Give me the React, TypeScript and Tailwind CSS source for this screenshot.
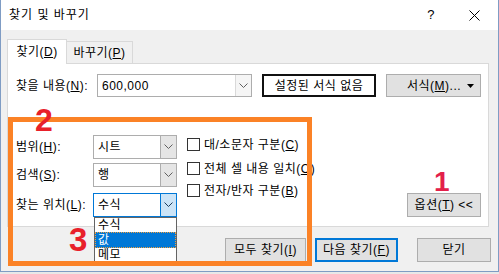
const font = { fontFamily: '"Liberation Sans", "Noto Sans CJK KR", sans-serif' };

const Chevron = ({ color = "#606060" }: { color?: string }) => (
  <svg width="9" height="6" viewBox="0 0 9 6">
    <path d="M0.5 0.5 L4.5 4.5 L8.5 0.5" fill="none" stroke={color} strokeWidth="1" />
  </svg>
);

const Combo = ({
  value,
  focused = false,
  className = "",
}: {
  value: string;
  focused?: boolean;
  className?: string;
}) => (
  <div
    className={`flex h-[24px] w-[84px] border bg-white ${
      focused ? "border-[#0078d7]" : "border-[#adadad]"
    } ${className}`}
  >
    <div className="flex flex-1 items-center pl-[4px] text-[12px]">{value}</div>
    <div
      className={`flex w-[16px] items-center justify-center border-l ${
        focused ? "border-[#0078d7] bg-[#cce4f7]" : "border-[#adadad] bg-[#e5e5e5]"
      }`}
    >
      <Chevron color={focused ? "#1c3c5c" : "#606060"} />
    </div>
  </div>
);

const Check = ({ children, className = "" }: { children: React.ReactNode; className?: string }) => (
  <div className={`flex h-[13px] items-center ${className}`}>
    <div className="h-[13px] w-[13px] border border-[#333333] bg-white" />
    <span className="ml-[4px] text-[12px] leading-none whitespace-nowrap">{children}</span>
  </div>
);

export default function App() {
  return (
    <div
      className="relative h-[274px] w-[499px] overflow-hidden bg-[#e8e8e8] tracking-[0.5px] text-[#000]"
      style={font}
    >
      <div className="flex h-[272px] w-[499px] flex-col border-x border-b border-[#7f9cc4] bg-[#f0f0f0]">
        {/* title bar */}
        <div className="flex h-[30px] items-center bg-white pl-[8px] text-[12px]">
          <span className="tracking-[1px]">찾기 및 바꾸기</span>
          <span className="ml-auto mr-[34px] text-[13px]">?</span>
          <svg width="11" height="11" viewBox="0 0 11 11" className="mr-[18px]">
            <path d="M0.5 0.5 L10.5 10.5 M10.5 0.5 L0.5 10.5" stroke="#000" strokeWidth="1" />
          </svg>
        </div>

        <div className="flex flex-col pl-[6px]">
          {/* tabs */}
          <div className="mt-[9px] flex items-end">
            <div className="relative z-10 -mb-px flex h-[25px] w-[60px] items-center justify-center border border-b-0 border-[#d9d9d9] bg-white text-[12px]">
              찾기(<u>D</u>)
            </div>
            <div className="flex h-[22px] w-[66px] items-center justify-center border border-l-0 border-b-0 border-[#d9d9d9] bg-[#f0f0f0] text-[12px]">
              바꾸기(<u>P</u>)
            </div>
          </div>

          {/* panel */}
          <div className="flex h-[164px] w-[482px] flex-col border border-[#d9d9d9] bg-white pl-[8px] pt-[10px]">
            <div className="flex h-[23px] items-center">
              <span className="w-[81px] text-[12px]">
                찾을 내용(<u>N</u>):
              </span>
              <div className="flex h-[23px] w-[155px] border border-[#adadad] bg-white">
                <div className="flex flex-1 items-center pl-[4px] text-[12px]">600,000</div>
                <div className="flex w-[16px] items-center justify-center border-l border-[#d9d9d9] bg-[#f5f5f5]">
                  <Chevron />
                </div>
              </div>
              <div className="ml-[10px] flex h-[23px] w-[114px] items-center justify-center border-2 border-[#111] bg-white text-[12px]">
                설정된 서식 없음
              </div>
              <div className="ml-[10px] flex h-[23px] w-[95px] items-center border border-[#adadad] bg-[#e1e1e1] text-[12px]">
                <span className="ml-[20px]">
                  서식(<u>M</u>)...
                </span>
                <svg width="7" height="4" viewBox="0 0 7 4" className="ml-auto mr-[6px]">
                  <path d="M0 0 L7 0 L3.5 4 Z" fill="#000" />
                </svg>
              </div>
            </div>

            <div className="mt-[38px] flex">
              <div className="flex flex-col">
                <div className="flex items-center">
                  <span className="w-[77px] text-[12px]">
                    범위(<u>H</u>):
                  </span>
                  <Combo value="시트" />
                </div>
                <div className="mt-[4px] flex items-center">
                  <span className="w-[77px] text-[12px]">
                    검색(<u>S</u>):
                  </span>
                  <Combo value="행" />
                </div>
                <div className="mt-[6px] flex items-center">
                  <span className="w-[77px] text-[12px] whitespace-nowrap">
                    찾는 위치(<u>L</u>):
                  </span>
                  <Combo value="수식" focused />
                </div>
              </div>

              <div className="ml-[10px] mt-[3px] flex flex-col">
                <Check>
                  대/소문자 구분(<u>C</u>)
                </Check>
                <Check className="mt-[11px]">
                  전체 셀 내용 일치(<u>O</u>)
                </Check>
                <Check className="mt-[9px]">
                  전자/반자 구분(<u>B</u>)
                </Check>
              </div>

              <div className="ml-auto mr-[7px] mt-[58px] flex h-[24px] w-[74px] items-center justify-center border border-[#adadad] bg-[#e1e1e1] text-[12px]">
                옵션(<u>T</u>) &lt;&lt;
              </div>
            </div>
          </div>

          {/* bottom buttons */}
          <div className="mt-[11px] flex w-[484px] justify-end">
            <div className="flex h-[24px] w-[81px] items-center justify-center border border-[#adadad] bg-[#e1e1e1] text-[12px]">
              모두 찾기(<u>I</u>)
            </div>
            <div className="ml-[9px] flex h-[24px] w-[83px] items-center justify-center border-2 border-[#0078d7] bg-[#e1e1e1] text-[12px]">
              다음 찾기(<u>F</u>)
            </div>
            <div className="ml-[19px] flex h-[24px] w-[74px] items-center justify-center border border-[#adadad] bg-[#e1e1e1] text-[12px]">
              닫기
            </div>
          </div>
        </div>
      </div>

      {/* dropdown list */}
      <div className="absolute left-[94px] top-[217px] flex h-[46px] w-[83px] flex-col border border-[#646464] bg-white text-[12px]">
        <div className="flex h-[14px] items-center pl-[3px]">수식</div>
        <div className="flex h-[16px] items-center border border-dotted border-[#f0a040] bg-[#0078d7] pl-[2px] text-white">
          값
        </div>
        <div className="flex h-[14px] items-center pl-[3px]">메모</div>
      </div>

      {/* annotations */}
      <div className="pointer-events-none absolute left-[8px] top-[117px] h-[149px] w-[304px] border-[5px] border-[#fb8226]" />
      <div className="absolute left-[35px] top-[104px] text-[32px] font-bold leading-none tracking-normal text-[#e8202a]">2</div>
      <div className="absolute left-[69px] top-[223px] text-[33px] font-bold leading-none tracking-normal text-[#e8202a]">3</div>
      <div className="absolute left-[434px] top-[168px] text-[28px] font-bold leading-none tracking-normal text-[#e3204a]">1</div>
    </div>
  );
}
